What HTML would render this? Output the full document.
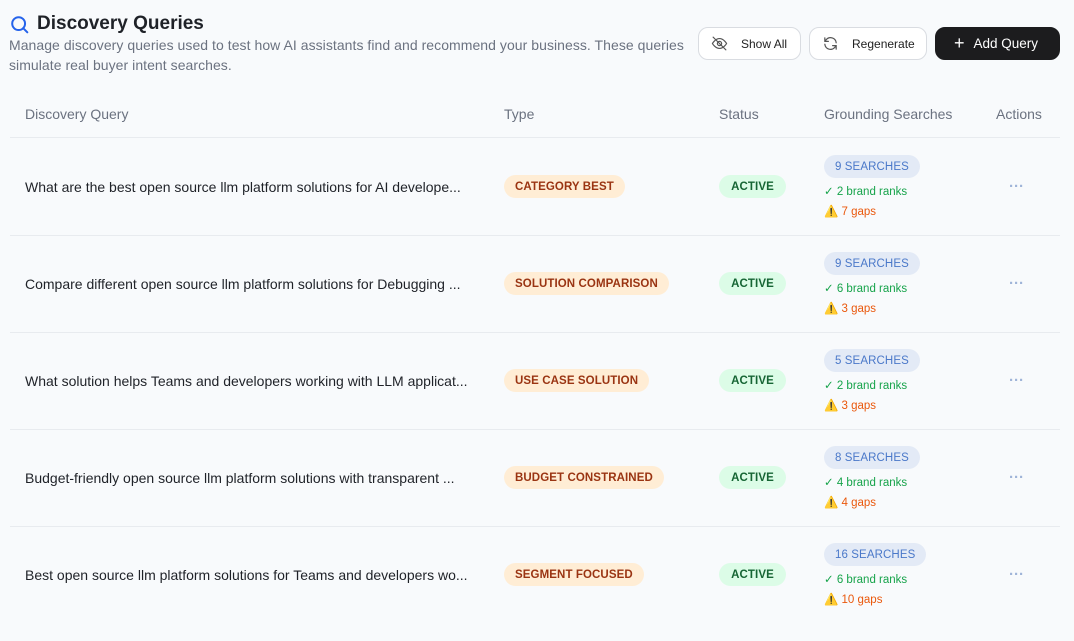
<!DOCTYPE html>
<html><head><meta charset="utf-8"><style>
*{margin:0;padding:0;box-sizing:border-box}
body{width:1074px;height:641px;background:#f8fafc;font-family:"Liberation Sans",sans-serif;position:relative;overflow:hidden;color:#1f2937}
.abs{position:absolute}
h1{position:absolute;left:37px;top:13px;font-size:19px;font-weight:600;color:#1f2228}
.desc{left:9px;top:35px;width:690px;font-size:14px;letter-spacing:0.05px;line-height:20px;color:#6b7280}
.btn{position:absolute;top:27px;height:33px;border:1px solid #d9dce1;border-radius:10px;background:#fff;font-size:12px;color:#222;display:flex;align-items:center}
.th{position:absolute;top:106px;font-size:14px;color:#6b7280}
.line{position:absolute;left:10px;width:1050px;height:1px;background:#e8ebef}
.q{position:absolute;left:25px;font-size:14px;letter-spacing:0;color:#1f2228}
.pill{position:absolute;height:23px;border-radius:12px;font-size:11.5px;font-weight:600;display:flex;align-items:center;padding:0 11px;letter-spacing:.1px}
.type{left:504px;background:#ffedd5;color:#9a3412}
.act{left:719px;background:#dcfce7;color:#166534;width:67px;justify-content:center}
.srch{left:824px;background:#e3eaf6;color:#4a78c9;font-weight:500}
.ok{position:absolute;left:824px;font-size:11.5px;color:#16a34a}
.gap{position:absolute;left:824px;font-size:11.5px;color:#ea580c}
.dots{position:absolute;left:1009px;font-size:15px;font-weight:bold;color:#9fb4d8;letter-spacing:0}
</style></head><body>
<svg class="abs" style="left:9px;top:14px" width="22" height="22" viewBox="0 0 24 24" fill="none" stroke="#2563eb" stroke-width="2.2" stroke-linecap="round"><circle cx="10.5" cy="10.5" r="7"/><path d="M15.5 15.5L20 20"/></svg>
<h1>Discovery Queries</h1>
<div class="abs desc">Manage discovery queries used to test how AI assistants find and recommend your business. These queries simulate real buyer intent searches.</div>
<div class="btn" style="left:698px;width:103px"><svg style="margin-left:12px" width="17" height="17" viewBox="0 0 24 24" fill="none" stroke="#555" stroke-width="1.7" stroke-linecap="round"><path d="M2 12s4-7 10-7 10 7 10 7-4 7-10 7S2 12 2 12z"/><circle cx="12" cy="12" r="3"/><path d="M3 3l18 18"/></svg><span style="margin-left:13px">Show All</span></div>
<div class="btn" style="left:809px;width:118px"><svg style="margin-left:12px" width="17" height="17" viewBox="0 0 24 24" fill="none" stroke="#555" stroke-width="1.7" stroke-linecap="round"><path d="M20 11a8 8 0 0 0-14-4.5L4 9M4 4v5h5M4 13a8 8 0 0 0 14 4.5L20 15M20 20v-5h-5"/></svg><span style="margin-left:13px">Regenerate</span></div>
<div class="btn" style="left:935px;width:125px;background:#1c1c1e;border-color:#1c1c1e;color:#fff;font-size:13.5px"><span style="margin-left:18px;font-size:18px;font-weight:300">+</span><span style="margin-left:9px">Add Query</span></div>
<div class="th" style="left:25px">Discovery Query</div>
<div class="th" style="left:504px">Type</div>
<div class="th" style="left:719px">Status</div>
<div class="th" style="left:824px">Grounding Searches</div>
<div class="th" style="left:996px">Actions</div>
<div class="line" style="top:137px"></div>
<div class="line" style="top:235px"></div>
<div class="line" style="top:332px"></div>
<div class="line" style="top:429px"></div>
<div class="line" style="top:526px"></div>

<div class="q" style="top:179px">What are the best open source llm platform solutions for AI develope...</div>
<div class="pill type" style="top:175px">CATEGORY BEST</div>
<div class="pill act" style="top:175px">ACTIVE</div>
<div class="pill srch" style="top:155px">9 SEARCHES</div>
<div class="ok" style="top:184px">✓ 2 brand ranks</div>
<div class="gap" style="top:204px">⚠️ 7 gaps</div>
<div class="dots" style="top:178px">···</div>

<div class="q" style="top:276px">Compare different open source llm platform solutions for Debugging ...</div>
<div class="pill type" style="top:272px">SOLUTION COMPARISON</div>
<div class="pill act" style="top:272px">ACTIVE</div>
<div class="pill srch" style="top:252px">9 SEARCHES</div>
<div class="ok" style="top:281px">✓ 6 brand ranks</div>
<div class="gap" style="top:301px">⚠️ 3 gaps</div>
<div class="dots" style="top:275px">···</div>

<div class="q" style="top:373px">What solution helps Teams and developers working with LLM applicat...</div>
<div class="pill type" style="top:369px">USE CASE SOLUTION</div>
<div class="pill act" style="top:369px">ACTIVE</div>
<div class="pill srch" style="top:349px">5 SEARCHES</div>
<div class="ok" style="top:378px">✓ 2 brand ranks</div>
<div class="gap" style="top:398px">⚠️ 3 gaps</div>
<div class="dots" style="top:372px">···</div>

<div class="q" style="top:470px">Budget-friendly open source llm platform solutions with transparent ...</div>
<div class="pill type" style="top:466px">BUDGET CONSTRAINED</div>
<div class="pill act" style="top:466px">ACTIVE</div>
<div class="pill srch" style="top:446px">8 SEARCHES</div>
<div class="ok" style="top:475px">✓ 4 brand ranks</div>
<div class="gap" style="top:495px">⚠️ 4 gaps</div>
<div class="dots" style="top:469px">···</div>

<div class="q" style="top:567px">Best open source llm platform solutions for Teams and developers wo...</div>
<div class="pill type" style="top:563px">SEGMENT FOCUSED</div>
<div class="pill act" style="top:563px">ACTIVE</div>
<div class="pill srch" style="top:543px">16 SEARCHES</div>
<div class="ok" style="top:572px">✓ 6 brand ranks</div>
<div class="gap" style="top:592px">⚠️ 10 gaps</div>
<div class="dots" style="top:566px">···</div>
</body></html>
